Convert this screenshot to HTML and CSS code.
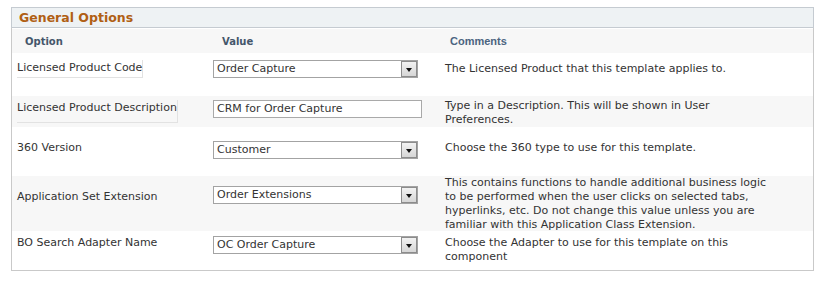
FILE: index.html
```html
<!DOCTYPE html>
<html lang="en">
<head>
<meta charset="utf-8">
<title>General Options</title>
<link rel="stylesheet" href="styles.css">
</head>
<body>
<div class="panel">
  <div class="panel-head"><h2 class="panel-title">General Options</h2></div>
  <div class="panel-body">
    <div class="grid-head">
      <div class="gh gh-option">Option</div>
      <div class="gh gh-value">Value</div>
      <div class="gh gh-comments">Comments</div>
    </div>

    <div class="row r1">
      <div class="cell-label"><span class="lbl lbl-boxed">Licensed Product Code</span></div>
      <div class="cell-value"><div class="select"><span class="select-text">Order Capture</span><span class="arrow"></span></div></div>
      <div class="cell-comment">The Licensed Product that this template applies to.</div>
    </div>

    <div class="row r2 alt">
      <div class="cell-label"><span class="lbl lbl-boxed">Licensed Product Description</span></div>
      <div class="cell-value"><div class="input">CRM for Order Capture</div></div>
      <div class="cell-comment">Type in a Description. This will be shown in User Preferences.</div>
    </div>

    <div class="row r3">
      <div class="cell-label"><span class="lbl">360 Version</span></div>
      <div class="cell-value"><div class="select"><span class="select-text">Customer</span><span class="arrow"></span></div></div>
      <div class="cell-comment">Choose the 360 type to use for this template.</div>
    </div>

    <div class="row r4 alt">
      <div class="cell-label"><span class="lbl">Application Set Extension</span></div>
      <div class="cell-value"><div class="select"><span class="select-text">Order Extensions</span><span class="arrow"></span></div></div>
      <div class="cell-comment">This contains functions to handle additional business logic to be performed when the user clicks on selected tabs, hyperlinks, etc. Do not change this value unless you are familiar with this Application Class Extension.</div>
    </div>

    <div class="row r5">
      <div class="cell-label"><span class="lbl">BO Search Adapter Name</span></div>
      <div class="cell-value"><div class="select"><span class="select-text">OC Order Capture</span><span class="arrow"></span></div></div>
      <div class="cell-comment">Choose the Adapter to use for this template on this component</div>
    </div>
  </div>
</div>
</body>
</html>
```
FILE: styles.css
```css
body {
  margin: 0;
  background: #ffffff;
  font-family: "DejaVu Sans", Verdana, sans-serif;
  font-size: 11px;
  color: #333333;
}

.panel {
  margin: 7px 0 0 11px;
  width: 803px;
}

.panel-head {
  box-sizing: border-box;
  height: 21px;
  border: 1px solid #c5cbd1;
  background: #eef2f4;
  padding-left: 7px;
  display: flex;
  align-items: center;
}

.panel-title {
  margin: 0;
  font-family: "DejaVu Sans", Verdana, sans-serif;
  font-size: 12.5px;
  font-weight: bold;
  color: #b05f14;
  line-height: 16px;
}

.panel-body {
  border: 1px solid #c9c9c9;
  border-top: 0;
  padding-top: 1px;
}

.grid-head,
.row {
  display: grid;
  grid-template-columns: 201px 232px 1fr;
}

.grid-head {
  height: 24px;
  background: #f7f7f7;
  align-items: center;
}

.gh {
  font-weight: bold;
  font-size: 10px;
  color: #44566b;
}

.gh-option { padding-left: 13px; }
.gh-value { padding-left: 9px; }
.gh-comments {
  padding-left: 5px;
  font-family: "Liberation Sans", Arial, sans-serif;
  font-size: 11px;
  color: #4b6480;
}

.row {
  height: var(--h);
  align-items: start;
}

.row.alt { background: #f7f7f7; }

.r1 { --h: 43px; --pl: 7px; --pv: 7px; --pc: 9px; --lb: 2px; }
.r2 { --h: 31px; --pl: 4px; --pv: 4px; --pc: 3px; --lb: 7px; }
.r3 { --h: 49px; --pl: 14px; --pv: 14px; --pc: 14px; }
.r4 { --h: 55px; --pl: 14px; --pv: 10px; --pc: 0px; }
.r5 { --h: 39px; --pl: 5px; --pv: 5px; --pc: 5px; }

.cell-label {
  padding: var(--pl) 0 0 5px;
}

.lbl {
  display: inline-block;
  line-height: 14px;
}

.lbl-boxed {
  padding: 1px 0 var(--lb) 0;
  border-right: 1px solid #e2e2e2;
  border-bottom: 1px solid #e2e2e2;
}

.cell-value {
  padding-top: var(--pv);
}

.cell-comment {
  padding-top: var(--pc);
  line-height: 14px;
  width: 328px;
}

.select {
  box-sizing: border-box;
  width: 205px;
  height: 18px;
  border: 1px solid #a3a3a3;
  background: #ffffff;
  display: flex;
  align-items: center;
}

.select-text {
  flex: 1;
  padding-left: 3px;
  line-height: 16px;
}

.arrow {
  box-sizing: border-box;
  width: 16px;
  height: 16px;
  border: 1px solid #8c8c8c;
  background: linear-gradient(#f2f2f2, #d6d6d6);
  display: flex;
  align-items: center;
  justify-content: center;
}

.arrow::before {
  content: "";
  border-left: 3px solid transparent;
  border-right: 3px solid transparent;
  border-top: 4px solid #111111;
  margin-top: 1px;
}

.input {
  box-sizing: border-box;
  width: 209px;
  height: 18px;
  border: 1px solid #a9a9a9;
  background: #ffffff;
  padding-left: 3px;
  line-height: 16px;
}
```
